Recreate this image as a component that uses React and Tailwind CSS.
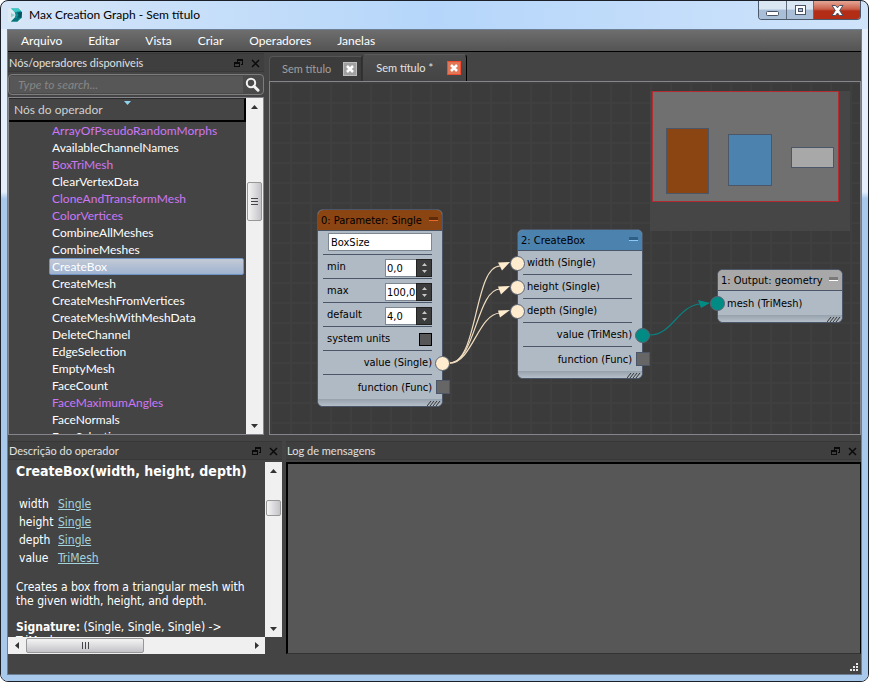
import { useState } from 'react'

const UI = "font-['Lato','Open_Sans',sans-serif]"
const TAHOMA = "font-['DejaVu_Sans_Condensed','DejaVu_Sans',sans-serif]"

const MENUS = ['Arquivo', 'Editar', 'Vista', 'Criar', 'Operadores', 'Janelas']

const OPERATORS = [
  { name: 'ArrayOfPseudoRandomMorphs', compound: true },
  { name: 'AvailableChannelNames' },
  { name: 'BoxTriMesh', compound: true },
  { name: 'ClearVertexData' },
  { name: 'CloneAndTransformMesh', compound: true },
  { name: 'ColorVertices', compound: true },
  { name: 'CombineAllMeshes' },
  { name: 'CombineMeshes' },
  { name: 'CreateBox' },
  { name: 'CreateMesh' },
  { name: 'CreateMeshFromVertices' },
  { name: 'CreateMeshWithMeshData' },
  { name: 'DeleteChannel' },
  { name: 'EdgeSelection' },
  { name: 'EmptyMesh' },
  { name: 'FaceCount' },
  { name: 'FaceMaximumAngles', compound: true },
  { name: 'FaceNormals' },
  { name: 'FaceSelection' },
]

const PORTS = [
  ['width', 'Single'],
  ['height', 'Single'],
  ['depth', 'Single'],
  ['value', 'TriMesh'],
]

export default function App() {
  return (
    <div className="h-screen min-h-[480px] bg-white">
      <div className={`${UI} h-full flex flex-col rounded-lg border border-[#1c2129] bg-linear-to-r from-[#d6e6f8] via-[#b5d6fa] to-[#cfe3fa] text-xs overflow-hidden`}>
        <TitleBar />
        <div className="flex-1 min-h-0 flex px-1.5 pb-1.5 bg-linear-to-b from-[#e4effb] from-25% to-[#a9c9ec] to-26%">
          <div className="flex-1 min-w-0 flex flex-col border border-[#6d7f94] bg-[#444444]">
            <MenuBar />
            <div className="flex-1 min-h-0 flex gap-[5px] pt-px">
              <OperatorPanel />
              <GraphEditor />
            </div>
            <div className="h-[219px] shrink-0 flex gap-1 pt-1.5">
              <DescriptionPanel />
              <LogPanel />
            </div>
            <StatusBar />
          </div>
        </div>
      </div>
    </div>
  )
}

function TitleBar() {
  return (
    <header className="h-7 shrink-0 flex items-start px-[7px]">
      <div className="h-7 flex-1 flex items-center gap-1">
        <AppLogo />
        <h1 className="text-black">Max Creation Graph - Sem título</h1>
      </div>
      <div className="flex h-[19px] rounded-b border border-t-0 border-[#4c5a6c] overflow-hidden">
        <button aria-label="Minimizar" className="w-7 flex items-center justify-center border-r border-[#5d6b7d] bg-linear-to-b from-[#dbe6f3] from-45% to-[#a9bfd8] to-50%">
          <svg width="13" height="13"><rect x="0.500" y="7.500" width="12" height="4" rx="1" fill="#fff" stroke="#4a5365" /></svg>
        </button>
        <button aria-label="Maximizar" className="w-[27px] flex items-center justify-center border-r border-[#5d6b7d] bg-linear-to-b from-[#dbe6f3] from-45% to-[#a9bfd8] to-50%">
          <svg width="13" height="11">
            <rect x="1.500" y="0.500" width="10" height="9" fill="#fff" stroke="#4a5365" />
            <rect x="4.500" y="3.500" width="4" height="3" fill="#a9bfd8" stroke="#4a5365" />
          </svg>
        </button>
        <button aria-label="Fechar" className="w-[46px] flex items-center justify-center bg-linear-to-b from-[#e2a08f] from-5% via-[#c9604a] via-45% to-[#b32c15] to-55%">
          <svg width="13" height="11" viewBox="0 0 13 11">
            <path d="M1 .5h3.500l2 2.300 2-2.300H12L8.700 5.500l3.300 5H8.500l-2-2.500-2 2.500H1l3.300-5z" fill="#fff" stroke="#4a4f60" />
          </svg>
        </button>
      </div>
    </header>
  )
}

function AppLogo() {
  return (
    <svg width="17" height="16" viewBox="0 0 17 16" aria-hidden="true">
      <path d="M0 1h13v14H0z" fill="#dcebf2" />
      <path d="M3 1.500h7.500L14 5l-.5 6-4 3.500H3L6.500 11l1-3-1-3.500z" fill="#0e8f96" />
      <path d="M3 1.500h7.500L13 4 6.500 5z" fill="#3cc9c5" />
      <path d="M9 5.500L14 5l-.5 6L9 10.500 10.500 8z" fill="#055660" />
      <path d="M3 14.500L6.500 11h5l-2 3.500z" fill="#0a747c" />
      <path d="M3 6l4 2-4 2.500z" fill="#8fd0d3" />
    </svg>
  )
}

function MenuBar() {
  return (
    <nav className="h-[22px] shrink-0 flex items-center pl-[13px] gap-[26px] border-b border-black bg-linear-to-b from-[#6e6e6e] to-[#545454] text-white">
      {MENUS.map((m) => <button key={m}>{m}</button>)}
    </nav>
  )
}

function DockTitle({ children }) {
  return (
    <div className="h-[19px] shrink-0 flex items-center border-y border-[#383838] bg-[#3f3f3f] pt-px pl-px pr-1 text-[11px] text-[#e0e0e0]">
      <h2 className="flex-1 whitespace-nowrap">{children}</h2>
      <div className="flex items-center gap-2">
        <button aria-label="Desencaixar">
          <svg width="9" height="9" shapeRendering="crispEdges" fill="none" stroke="#0a0a0a">
            <path d="M3 3.500V.500h5.500v5H6.500M2.500 1h6.500" />
            <path d="M.500 3.500h5v4h-5zM0 4.500h6" />
          </svg>
        </button>
        <button aria-label="Fechar painel">
          <svg width="9" height="9" stroke="#0a0a0a" strokeWidth="1.500"><path d="M1 1l7 7M8 1l-7 7" /></svg>
        </button>
      </div>
    </div>
  )
}

function VScroll({ before, thumb, grip }) {
  return (
    <div className="w-[17px] shrink-0 flex flex-col items-center bg-[#f0f0f0]">
      <button aria-label="Rolar para cima" className="h-[17px] flex items-center">
        <svg width="7" height="4"><path d="M0 4l3.500-4L7 4z" fill="#333" /></svg>
      </button>
      <div className={before} />
      <div className={`${thumb} w-[15px] flex flex-col items-center justify-center gap-0.5 rounded-xs border border-[#979797] bg-linear-to-r from-[#f4f4f4] via-[#dcdcdf] to-[#c4c4c8]`}>
        {grip && [0, 1, 2].map((i) => <span key={i} className="w-[7px] h-px bg-[#44444a]" />)}
      </div>
      <div className="flex-1" />
      <button aria-label="Rolar para baixo" className="h-[17px] flex items-center">
        <svg width="7" height="4"><path d="M0 0l3.500 4L7 0z" fill="#333" /></svg>
      </button>
    </div>
  )
}

function HScroll() {
  return (
    <div className="h-[17px] shrink-0 flex items-center bg-[#f0f0f0] mr-[17px]">
      <button aria-label="Rolar para a esquerda" className="w-[18px] flex justify-center">
        <svg width="4" height="7"><path d="M4 0L0 3.500 4 7z" fill="#333" /></svg>
      </button>
      <div className="w-[118px] h-[15px] flex items-center justify-center gap-0.5 rounded-xs border border-[#979797] bg-linear-to-b from-[#f4f4f4] via-[#dcdcdf] to-[#c4c4c8]">
        {[0, 1, 2].map((i) => <span key={i} className="w-px h-[7px] bg-[#44444a]" />)}
      </div>
      <div className="flex-1" />
      <button aria-label="Rolar para a direita" className="w-[17px] flex justify-center">
        <svg width="4" height="7"><path d="M0 0l4 3.500L0 7z" fill="#333" /></svg>
      </button>
    </div>
  )
}

function OperatorPanel() {
  const [selected, setSelected] = useState('CreateBox')

  return (
    <aside className="w-64 shrink-0 flex flex-col gap-0.5">
      <DockTitle>Nós/operadores disponíveis</DockTitle>
      <div className="h-[21px] shrink-0 flex items-center rounded-sm border border-[#7d7d7d] bg-[#4a4a4a] p-px">
        <input
          aria-label="Pesquisar operadores"
          placeholder="Type to search..."
          className="flex-1 min-w-0 h-full bg-[#575757] pl-2 italic text-white placeholder:text-[#868686] outline-none"
        />
        <button aria-label="Pesquisar" className="w-[19px] flex justify-center">
          <svg width="15" height="15" viewBox="0 0 15 15" fill="none" stroke="#f2f2f2">
            <circle cx="6" cy="6" r="4.200" strokeWidth="2" />
            <path d="M9 9.200l4 4" strokeWidth="3" strokeLinecap="round" />
          </svg>
        </button>
      </div>
      <div className="flex-1 min-h-0 flex border border-[#85858c]">
        <div className="flex-1 min-w-0 flex flex-col">
          <div className="relative h-6 shrink-0 flex items-center pl-[5px] border-t border-r-2 border-b-2 border-t-[#2a2a2a] border-r-black border-b-black bg-[#454545] text-[#d0d0d0]">
            Nós do operador
            <svg className="absolute top-0.5 left-[115px]" width="7" height="4"><path d="M0 0h7L3.500 4z" fill="#8fd4ee" /></svg>
          </div>
          <ul className="flex-1 min-h-0 overflow-hidden pl-10 pr-0.5">
            {OPERATORS.map((op) => (
              <li key={op.name} className="h-[17px]">
                <OperatorRow op={op} selected={selected === op.name} onSelect={setSelected} />
              </li>
            ))}
          </ul>
        </div>
        <VScroll before="h-[67px]" thumb="h-[39px]" grip />
      </div>
    </aside>
  )
}

function OperatorRow({ op, selected, onSelect }) {
  const look = selected
    ? 'border-[#6d93c8] bg-linear-to-b from-[#c3cad6] to-[#9fb3d0] text-white'
    : 'border-transparent'
  return (
    <button
      onClick={() => onSelect(op.name)}
      className={`h-[17px] w-full flex items-center rounded-xs border pl-0.5 ${look} ${op.compound ? 'text-[#cc77f5]' : 'text-white'}`}
    >
      {op.name}
    </button>
  )
}

function Tab({ label, active }) {
  return (
    <div
      role="tab"
      aria-selected={active}
      className={active
        ? 'h-[27px] flex items-center gap-3.5 rounded-t border border-b-0 border-t-[#5a5a5a] border-l-[#333333] border-r-black bg-linear-to-b from-[#4e4e4e] to-[#444444] pl-[13px] pr-[5px] text-[#e4e4e4]'
        : 'h-[25px] flex items-center gap-3 rounded-tl border border-b-0 border-[#555555] border-r-[#2e2e2e] bg-[#3c3c3c] pl-3 pr-1 text-[#a0a0a0]'}
    >
      <span>{label}</span>
      <button
        aria-label={`Fechar ${label}`}
        className={active
          ? 'size-3.5 flex items-center justify-center border border-[#f04a30] bg-[#e07858]'
          : 'size-3.5 flex items-center justify-center border border-[#bdbdbd] bg-[#a0a0a0]'}
      >
        <svg width="8" height="8" stroke="#fff" strokeWidth="2.500"><path d="M1 1l6 6M7 1l-6 6" /></svg>
      </button>
    </div>
  )
}

function GraphEditor() {
  return (
    <main className="flex-1 min-w-0 flex flex-col">
      <div role="tablist" className="h-7 shrink-0 flex items-end text-[11px]">
        <Tab label="Sem título" />
        <Tab label="Sem título *" active />
      </div>
      <div className="relative flex-1 min-h-0 overflow-hidden border border-[#85858c] bg-[#3b3b3b] bg-[linear-gradient(to_right,#3f3f3f_2px,transparent_2px),linear-gradient(to_bottom,#3f3f3f_2px,transparent_2px)] bg-size-[20px_20px]">
        <Minimap />
        <Wires />
        <ParameterNode />
        <CreateBoxNode />
        <OutputNode />
      </div>
    </main>
  )
}

function Minimap() {
  return (
    <div className="absolute top-[9px] right-2.5 w-[200px] h-[140px] bg-[#464646]">
      <div className="absolute left-0.5 top-0 w-[187px] h-[111px] border border-[#b02c30] bg-[#707070]" />
      <div className="absolute left-4 top-[37px] w-[43px] h-[66px] border border-[#4b5668] bg-[#8b4513]" />
      <div className="absolute left-[78px] top-[43px] w-11 h-[52px] border border-[#4b5668] bg-[#4c82ae]" />
      <div className="absolute left-[141px] top-14 w-[43px] h-[21px] border border-[#4b5668] bg-[#a8a8a8]" />
    </div>
  )
}

function Wires() {
  return (
    <svg className="absolute inset-0 size-full" fill="none" strokeWidth="1.200">
      <g stroke="#f0dcbe">
        <path d="M180 281C208 281 204 184 230 184" />
        <path d="M180 281C205 281 207 207 230 207" />
        <path d="M180 281C202 281 208 232 230 231" />
      </g>
      <g fill="#ffebcd">
        <path d="M240 180l-12 .500 4 8z" />
        <path d="M240 204l-12 .500 3 8z" />
        <path d="M240 228l-12 .500 2 7z" />
      </g>
      <path d="M380 253C402 253 408 224 430 222" stroke="#0a8080" />
      <path d="M440 221l-12-3 3 8z" fill="#008b84" />
    </svg>
  )
}

function Node({ title, place, tone, dash, children }) {
  return (
    <section className={`${TAHOMA} absolute w-[126px] rounded-md border border-[#4b5668] bg-[#afbac4] text-[11px] text-black ${place}`}>
      <header className={`h-[21px] flex items-center justify-between rounded-t-[5px] border-b border-[#4b5668] pt-0.5 pl-[3px] pr-1 ${tone}`}>
        <h3 className="whitespace-nowrap">{title}</h3>
        <button aria-label="Recolher" className={`w-[9px] h-1 border-b mb-1 ${dash}`} />
      </header>
      {children}
      <div className="h-[7px] flex justify-end items-center rounded-b-[5px] border-t border-[#98a3b0] bg-linear-to-b from-[#9aa5b0] to-[#b4bfc9] pr-px">
        <svg width="14" height="5" stroke="#333"><path d="M0 5l4-5M3 5l4-5M6 5l4-5M9 5l4-5" /></svg>
      </div>
    </section>
  )
}

function Row({ children, last, end }) {
  return (
    <div className={`relative h-6 ml-[5px] mr-2.5 flex items-center pt-0.5 pl-1 ${end ? 'justify-end' : 'justify-between'} ${last ? '' : 'border-b border-[#4b5668]'}`}>
      {children}
    </div>
  )
}

// Connectors sit across the node's edge.
function Port({ color, side }) {
  return (
    <span className={`absolute top-[5px] size-[15px] rounded-full border border-[#5a6474] ${color} ${side === 'in' ? '-left-[13px]' : '-right-[18px]'}`} />
  )
}

function FuncPort() {
  return <span className="absolute top-[5px] -right-[18px] size-[14px] border border-[#4b5668] bg-[#666666]" />
}

function Spinner({ id, label, value }) {
  return (
    <Row>
      <label htmlFor={id}>{label}</label>
      <div className="flex h-[18px]">
        <input id={id} defaultValue={value} className="w-[31px] h-full border border-r-0 border-[#7d8792] bg-white pt-0.5 pl-px outline-none" />
        <div className="w-4 flex flex-col items-center justify-between border border-[#222222] bg-[#3c3c3c] py-[3px]">
          <button aria-label={`Aumentar ${label}`}>
            <svg className="block" width="5" height="3"><path d="M0 3L2.500 0 5 3z" fill="#c8c8c8" /></svg>
          </button>
          <button aria-label={`Diminuir ${label}`}>
            <svg className="block" width="5" height="3"><path d="M0 0l2.500 3L5 0z" fill="#c8c8c8" /></svg>
          </button>
        </div>
      </div>
    </Row>
  )
}

function ParameterNode() {
  return (
    <Node title="0: Parameter: Single" place="left-[47px] top-[127px]" tone="bg-[#8b4513]" dash="bg-[#5e2c0a] border-[#e8692a]">
      <Row>
        <input aria-label="Nome do parâmetro" defaultValue="BoxSize" className="min-w-0 flex-1 h-[18px] ml-px mb-1 border border-[#7d8792] bg-white pt-0.5 pl-0.5 outline-none" />
      </Row>
      <Spinner id="min" label="min" value="0,0" />
      <Spinner id="max" label="max" value="100,0" />
      <Spinner id="default" label="default" value="4,0" />
      <Row>
        <label htmlFor="units">system units</label>
        <input id="units" type="checkbox" className="appearance-none size-[13px] border border-black bg-[#575757]" />
      </Row>
      <Row end>
        value (Single)
        <Port side="out" color="bg-[#ffebcd]" />
      </Row>
      <Row end last>
        function (Func)
        <FuncPort />
      </Row>
    </Node>
  )
}

function CreateBoxNode() {
  return (
    <Node title="2: CreateBox" place="left-[247px] top-[147px]" tone="bg-[#4c82ae]" dash="bg-[#2f5e86] border-[#8cc8f8]">
      {['width', 'height', 'depth'].map((p) => (
        <Row key={p}>
          {p} (Single)
          <Port side="in" color="bg-[#ffebcd]" />
        </Row>
      ))}
      <Row end>
        value (TriMesh)
        <Port side="out" color="bg-[#008b84]" />
      </Row>
      <Row end last>
        function (Func)
        <FuncPort />
      </Row>
    </Node>
  )
}

function OutputNode() {
  return (
    <Node title="1: Output: geometry" place="left-[447px] top-[187px]" tone="bg-[#a8a8a8]" dash="bg-[#7a7a7a] border-white">
      <Row last>
        mesh (TriMesh)
        <Port side="in" color="bg-[#008b84]" />
      </Row>
    </Node>
  )
}

function DescriptionPanel() {
  return (
    <section className="w-[274px] shrink-0 flex flex-col">
      <DockTitle>Descrição do operador</DockTitle>
      <div className="flex-1 min-h-0 flex pt-0.5">
        <div className={`${TAHOMA} flex-1 min-w-0 overflow-hidden pl-2 text-white`}>
          <h3 className="text-sm leading-[18px] font-bold whitespace-nowrap">CreateBox(width, height, depth)</h3>
          <table className="mt-[15px] ml-0.5">
            <tbody>
              {PORTS.map(([name, type]) => (
                <tr key={name} className="h-[18px]">
                  <td className="w-10 pl-px">{name}</td>
                  <td><a href="#type" className="text-[#a5d3dc] underline">{type}</a></td>
                </tr>
              ))}
            </tbody>
          </table>
          <p className="mt-[13px] leading-[14px]">
            Creates a box from a triangular mesh with the given width, height, and depth.
          </p>
          <p className="mt-3 leading-[14px]"><b>Signature:</b> (Single, Single, Single) -&gt; TriMesh</p>
        </div>
        <VScroll before="h-[21px]" thumb="h-4" />
      </div>
      <HScroll />
    </section>
  )
}

function LogPanel() {
  return (
    <section className="flex-1 min-w-0 flex flex-col gap-0.5">
      <DockTitle>Log de mensagens</DockTitle>
      <div className="flex-1 border border-t-2 border-l-2 border-black border-b-[#333333] bg-[#575757]" />
    </section>
  )
}

function StatusBar() {
  return (
    <footer className="h-5 shrink-0 flex justify-end items-end p-[3px]">
      <svg width="8" height="8" fill="#e8e8e8" shapeRendering="crispEdges">
        <path d="M6 0h2v2H6zM3 3h2v2H3zM6 3h2v2H6zM0 6h2v2H0zM3 6h2v2H3zM6 6h2v2H6z" />
      </svg>
    </footer>
  )
}
